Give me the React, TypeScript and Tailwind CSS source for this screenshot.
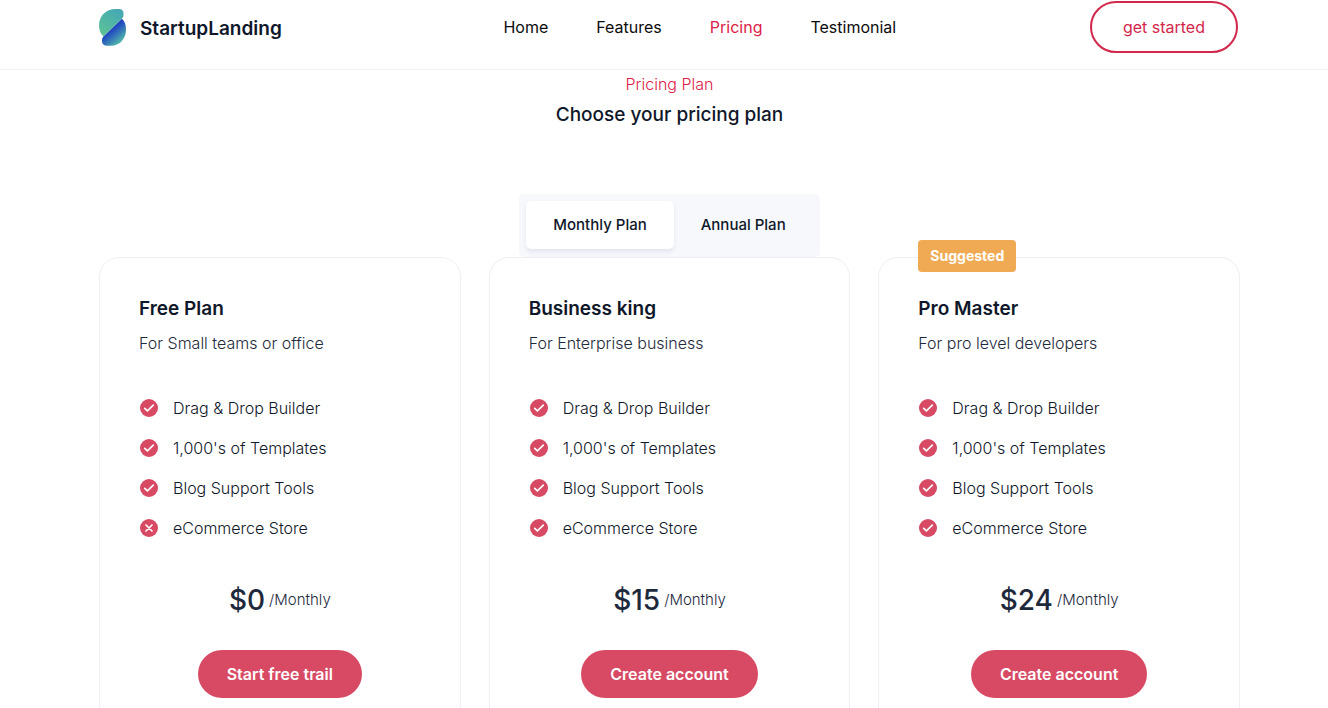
import { useState } from "react";

type Feature = { label: string; included: boolean };

type Plan = {
  name: string;
  description: string;
  monthly: string;
  annual: string;
  action: string;
  suggested?: boolean;
  features: Feature[];
};

const featureList = (storeIncluded: boolean): Feature[] => [
  { label: "Drag & Drop Builder", included: true },
  { label: "1,000's of Templates", included: true },
  { label: "Blog Support Tools", included: true },
  { label: "eCommerce Store", included: storeIncluded },
];

const plans: Plan[] = [
  {
    name: "Free Plan",
    description: "For Small teams or office",
    monthly: "$0",
    annual: "$0",
    action: "Start free trail",
    features: featureList(false),
  },
  {
    name: "Business king",
    description: "For Enterprise business",
    monthly: "$15",
    annual: "$150",
    action: "Create account",
    features: featureList(true),
  },
  {
    name: "Pro Master",
    description: "For pro level developers",
    monthly: "$24",
    annual: "$240",
    action: "Create account",
    suggested: true,
    features: featureList(true),
  },
];

const links = ["Home", "Features", "Pricing", "Testimonial"];

function Logo() {
  return (
    <svg width="30" height="38" viewBox="0 0 30 38" aria-hidden="true">
      <defs>
        <linearGradient id="leafTop" x1="0.75" y1="0" x2="0.25" y2="1">
          <stop offset="0" stopColor="#45a8b4" />
          <stop offset="1" stopColor="#5cc295" />
        </linearGradient>
        <linearGradient id="leafBottom" gradientUnits="userSpaceOnUse" x1="14" y1="19" x2="25" y2="32">
          <stop offset="0" stopColor="#1a35b4" />
          <stop offset="0.25" stopColor="#2450c0" />
          <stop offset="1" stopColor="#4fb3ac" />
        </linearGradient>
      </defs>
      <path
        d="M6.500 28.500C3.500 26 2 22 2 17.500C2 8 9 1 18.500 1H22C25 1 26.500 2.700 26.500 5.200V7C26.500 9 25.800 9.700 24.500 11Z"
        fill="url(#leafTop)"
      />
      <path
        d="M25 10.800C28 13.500 29 17.500 29 21.500C29 31 22.500 37.800 14 37.800H10C7 37.800 5 36 5 33.200V32C5 30.500 5.600 29.500 6.800 28.300Z"
        fill="url(#leafBottom)"
      />
    </svg>
  );
}

function StatusIcon({ included }: { included: boolean }) {
  return (
    <svg
      width="20"
      height="20"
      viewBox="0 0 20 20"
      fill="none"
      className="shrink-0"
      role="img"
      aria-label={included ? "Included" : "Not included"}
    >
      <circle cx="10" cy="10" r="9" fill="#d84a64" />
      <path
        d={included ? "M5.700 10.400L8.400 12.900L14.300 7.200" : "M7 7L13 13M13 7L7 13"}
        stroke="white"
        strokeWidth="1.700"
        strokeLinecap="round"
        strokeLinejoin="round"
      />
    </svg>
  );
}

function PlanCard({ plan, annual }: { plan: Plan; annual: boolean }) {
  return (
    <article className="relative rounded-[20px] border border-[#eeeff2] bg-white px-[39px] pt-[35px] pb-10">
      {plan.suggested && (
        <span className="absolute -top-[18px] left-[39px] rounded-[4px] bg-[#f0aa54] px-3 py-1 text-sm leading-6 font-bold text-white">
          Suggested
        </span>
      )}
      <h3 className="text-[19px] leading-8 font-semibold text-[#0f172a]">{plan.name}</h3>
      <p className="mt-1 text-base leading-7 font-light text-[#1e293b]">{plan.description}</p>
      <ul className="mt-[37px] flex flex-col gap-3">
        {plan.features.map((feature) => (
          <li key={feature.label} className="flex items-center gap-[14px] text-base leading-7 font-light text-[#0f172a]">
            <StatusIcon included={feature.included} />
            {feature.label}
          </li>
        ))}
      </ul>
      <p className="mt-[38px] flex items-center justify-center gap-1 text-[#1e293b]">
        <span className="text-[28px] leading-10 font-medium">{annual ? plan.annual : plan.monthly}</span>
        <span className="text-[15px] leading-6 font-light">{annual ? "/Annual" : "/Monthly"}</span>
      </p>
      <div className="mt-[30px] flex justify-center">
        <button
          type="button"
          className="h-12 rounded-full bg-[#d84a64] px-[29px] text-base font-semibold text-white hover:bg-[#c73d57]"
        >
          {plan.action}
        </button>
      </div>
    </article>
  );
}

export default function App() {
  const [annual, setAnnual] = useState(false);
  const tab = "h-12 rounded-[5px] px-[27px] text-[15px] font-medium";

  return (
    <div className="min-h-screen bg-white font-['Inter',sans-serif] text-[#0f172a]">
      <header className="flex items-center justify-between border-b border-[#f1f1f3] pt-px pr-[90px] pb-4 pl-[97px]">
        <a href="#home" className="flex items-center gap-[13px]">
          <Logo />
          <span className="pt-1 text-[19px] font-semibold">StartupLanding</span>
        </a>
        <nav className="flex gap-12 pl-7 text-base">
          {links.map((link) => (
            <a
              key={link}
              href={`#${link.toLowerCase()}`}
              className={link === "Pricing" ? "text-[#dc2148]" : "text-[#0b0b0c]"}
            >
              {link}
            </a>
          ))}
        </nav>
        <button
          type="button"
          className="rounded-[26px] border-2 border-[#d3264b] px-[31px] py-3 text-base text-[#d3264b]"
        >
          get started
        </button>
      </header>

      <main id="pricing" className="pr-[88px] pb-16 pl-[99px]">
        <div className="flex flex-col items-center pt-[2px] text-center">
          <p className="text-base font-light text-[#dc2148]">Pricing Plan</p>
          <h2 className="mt-[5px] text-[19px] leading-7 font-medium">Choose your pricing plan</h2>
          <div className="mt-[65px] flex rounded-[5px] bg-[#f7f8fc] px-[7px] pt-[7px] pb-2">
            <button
              type="button"
              aria-pressed={!annual}
              onClick={() => setAnnual(false)}
              className={`${tab} ${annual ? "" : "bg-white shadow-[0_3px_4px_rgba(38,78,118,0.1)]"}`}
            >
              Monthly Plan
            </button>
            <button
              type="button"
              aria-pressed={annual}
              onClick={() => setAnnual(true)}
              className={`${tab} ${annual ? "bg-white shadow-[0_3px_4px_rgba(38,78,118,0.1)]" : ""}`}
            >
              Annual Plan
            </button>
          </div>
        </div>
        <div className="grid grid-cols-3 gap-7">
          {plans.map((plan) => (
            <PlanCard key={plan.name} plan={plan} annual={annual} />
          ))}
        </div>
      </main>
    </div>
  );
}
